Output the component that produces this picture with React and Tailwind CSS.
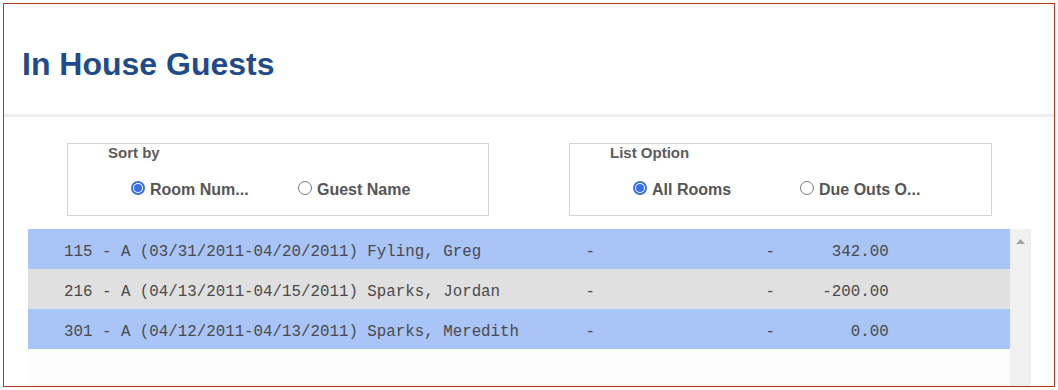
const guests = [
  { label: "115 - A (03/31/2011-04/20/2011) Fyling, Greg", amount: "342.00", alt: false },
  { label: "216 - A (04/13/2011-04/15/2011) Sparks, Jordan", amount: "-200.00", alt: true },
  { label: "301 - A (04/12/2011-04/13/2011) Sparks, Meredith", amount: "0.00", alt: false },
];

function Radio({ checked, label, className }) {
  return (
    <label className={"flex items-start gap-[5px] " + (className || "")}>
      {checked ? (
        <span className="mt-[1px] flex h-[14px] w-[14px] items-center justify-center rounded-full bg-[#3a6fe2]">
          <span className="flex h-[10px] w-[10px] items-center justify-center rounded-full bg-white">
            <span className="h-[8px] w-[8px] rounded-full bg-[#3a6fe2]" />
          </span>
        </span>
      ) : (
        <span className="mt-[1px] h-[14px] w-[14px] rounded-full border-[1.5px] border-[#787878] bg-white" />
      )}
      <span className="text-[16px] leading-[20px] font-bold text-[#555555]">{label}</span>
    </label>
  );
}

function OptionBox({ title, options }) {
  return (
    <div className="h-[73px] border border-[#d4d4d4] bg-white">
      <div className="pl-[40px] text-[15px] leading-[18px] font-bold text-[#5c5c5c]">{title}</div>
      <div className="mt-[18px] flex pl-[63px]">
        <Radio checked label={options[0]} className="w-[167px]" />
        <Radio label={options[1]} />
      </div>
    </div>
  );
}

export default function App() {
  return (
    <div className="h-[390px] w-[1058px] bg-white pt-[3px] pl-[3px]" style={{ fontFamily: '"Liberation Sans", Arial, sans-serif' }}>
      <div className="flex h-[384px] w-[1052px] flex-col overflow-hidden border border-[#b5391d] bg-white">
        <header className="h-[113px] shrink-0 border-b-[3px] border-[#eeeeee] pt-[44px] pl-[18px]">
          <h1 className="text-[32px] leading-[32px] font-bold text-[#1f4b8c]">In House Guests</h1>
        </header>

        <div className="mt-[26px] flex gap-[80px] pl-[63px]">
          <div className="w-[422px]">
            <OptionBox title="Sort by" options={["Room Num...", "Guest Name"]} />
          </div>
          <div className="w-[423px]">
            <OptionBox title="List Option" options={["All Rooms", "Due Outs O..."]} />
          </div>
        </div>

        <div className="mt-[13px] ml-[24px] flex flex-1">
          <div className="w-[982px] bg-[#fcfcfc]">
            {guests.map((g) => (
              <div
                key={g.label}
                className={
                  "flex h-[40px] pt-[14px] pl-[36px] text-[15.8px] leading-[18px] whitespace-pre text-[#4a4a4a] " +
                  (g.alt ? "bg-[#e0e0e0]" : "bg-[#a9c4f7]")
                }
                style={{ fontFamily: '"Liberation Mono", "Courier New", monospace' }}
              >
                <span className="w-[55ch]">{g.label}</span>
                <span className="w-[19ch]">-</span>
                <span className="w-[1ch]">-</span>
                <span className="w-[12ch] text-right">{g.amount}</span>
              </div>
            ))}
          </div>
          <div className="flex w-[21px] justify-center bg-[#f0f0f0] pt-[10px]">
            <svg width="9" height="5" viewBox="0 0 9 5" className="shrink-0">
              <polygon points="0,5 4.5,0 9,5" fill="#a3a3a3" />
            </svg>
          </div>
        </div>
      </div>
    </div>
  );
}
